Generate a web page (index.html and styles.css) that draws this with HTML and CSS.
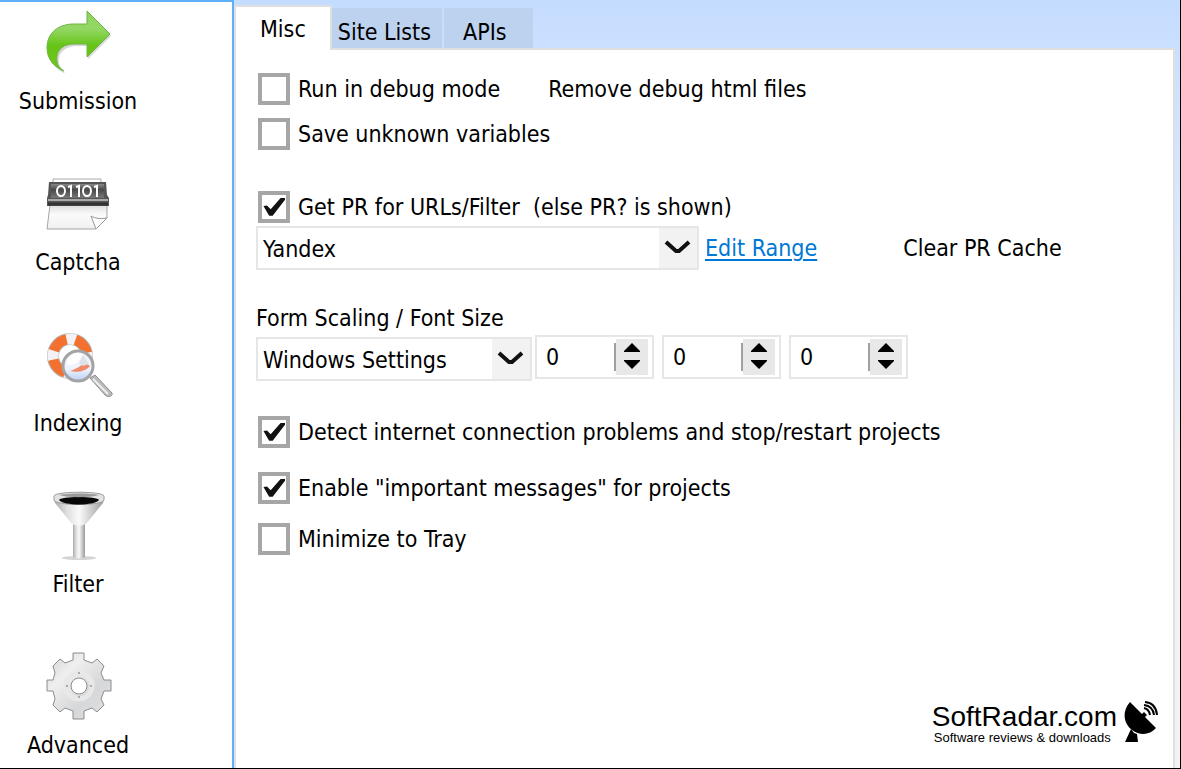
FILE: index.html
```html
<!DOCTYPE html>
<html lang="en">
<head>
  <meta charset="UTF-8">
  <meta name="viewport" content="width=device-width, initial-scale=1.0">
  <title>Options</title>
  <link rel="stylesheet" href="styles.css">
</head>
<body>
  <div class="window">
    <nav class="sidebar">
      <button class="nav-item" type="button">
        <svg class="nav-icon" viewBox="0 0 64 64" aria-hidden="true">
          <defs>
            <linearGradient id="green" x1="0" y1="0" x2="0" y2="1">
              <stop offset="0" stop-color="#8fd35f"/>
              <stop offset=".3" stop-color="#93d764"/>
              <stop offset=".58" stop-color="#66c416"/>
              <stop offset="1" stop-color="#6cc51c"/>
            </linearGradient>
          </defs>
          <path d="M17 62C8 58 1 49 1 38C1 23 12 14 28 14H41V2L64 25L41 48V35H30C20 35 13 40 12 47C11 54 13 58 18 62Z" fill="#888" opacity=".35" transform="translate(1 1)"/>
          <path d="M18 61C8 57 1 49 1 38C1 23 12 14 28 14H41V1L64 24L41 47V34H28C18 34 12 39 11 46C10 53 12 57 18 61Z" fill="url(#green)" stroke="#6fb544"/>
        </svg>
        Submission
      </button>
      <button class="nav-item" type="button">
        <svg class="nav-icon" viewBox="0 0 64 64" aria-hidden="true">
          <defs>
            <linearGradient id="dark" x1="0" y1="0" x2="0" y2="1">
              <stop offset="0" stop-color="#888"/>
              <stop offset=".4" stop-color="#4a4a4a"/>
              <stop offset="1" stop-color="#777"/>
            </linearGradient>
            <linearGradient id="sheet" x1="0" y1="0" x2="0" y2="1">
              <stop offset="0" stop-color="#dedede"/>
              <stop offset=".4" stop-color="#fafafa"/>
              <stop offset="1" stop-color="#f0f0f0"/>
            </linearGradient>
          </defs>
          <path d="M7 12V8H55V12" fill="#fff" stroke="#aaa"/>
          <path d="M4 34H61V47L50 58H1Z" fill="url(#sheet)" stroke="#a5a5a5"/>
          <path d="M61 47L50 58L45 45C50 48 56 48 61 47Z" fill="#fff" stroke="#999"/>
          <path d="M3 11H60L61 24L63 27V35H1V27L2 24Z" fill="#555"/>
          <rect x="5" y="13" width="53" height="14" fill="url(#dark)"/>
          <path d="M2 29H62" stroke="#aaa" stroke-width="2"/>
          <path d="M2 33H62" stroke="#333" stroke-width="3"/>
          <g fill="none" stroke="#fff" stroke-width="2">
            <ellipse cx="15" cy="20" rx="4" ry="5"/>
            <path d="M22 16L25 15V26M30 16L33 15V26M48 16L51 15V26"/>
            <ellipse cx="41" cy="20" rx="4" ry="5"/>
          </g>
        </svg>
        Captcha
      </button>
      <button class="nav-item" type="button">
        <svg class="nav-icon" viewBox="0 0 64 64" aria-hidden="true">
          <defs>
            <linearGradient id="lens" x1="0" y1="0" x2="0" y2="1">
              <stop offset="0" stop-color="#f1f3f8"/>
              <stop offset=".6" stop-color="#eef3fd"/>
              <stop offset="1" stop-color="#b9cff6"/>
            </linearGradient>
          </defs>
          <circle cx="24" cy="24" r="17" fill="none" stroke="#b4b4b4" stroke-width="12"/>
          <circle cx="24" cy="24" r="17" fill="none" stroke="#f4702f" stroke-width="10"/>
          <circle cx="24" cy="24" r="17" fill="none" stroke="#f2f2f4" stroke-width="11" stroke-dasharray="9 17.7" stroke-dashoffset="4"/>
          <path d="M44 46L49 43L66 61C67 64 63 66 59 63Z" fill="#bbb" stroke="#8e8e8e"/>
          <path d="M47 47L62 62" stroke="#eee" stroke-width="2"/>
          <circle cx="32" cy="34" r="15" fill="url(#lens)" stroke="#a3a3a3" stroke-width="3"/>
          <path d="M24 39C30 37 36 34 38 30L44 34C40 39 32 41 24 39Z" fill="#f08a68"/>
          <path d="M21 28C24 22 32 19 36 22C35 29 29 34 21 33Z" fill="#fff"/>
          <path d="M37 23L43 32L37 34L33 31Z" fill="#dfe1e8"/>
        </svg>
        Indexing
      </button>
      <button class="nav-item" type="button">
        <svg class="nav-icon" viewBox="0 0 64 64" aria-hidden="true">
          <defs>
            <linearGradient id="metal" x1="0" y1="0" x2="1" y2="0">
              <stop offset="0" stop-color="#aaa"/>
              <stop offset=".25" stop-color="#ddd"/>
              <stop offset=".5" stop-color="#fafafa"/>
              <stop offset=".75" stop-color="#ccc"/>
              <stop offset="1" stop-color="#999"/>
            </linearGradient>
          </defs>
          <ellipse cx="33" cy="65" rx="17" ry="2" fill="#aaa" opacity=".5"/>
          <path d="M27 29H39V64Q33 67 27 64Z" fill="url(#metal)"/>
          <path d="M8 6H58L57 10L40 31Q33 34 26 31L9 10Z" fill="url(#metal)"/>
          <path d="M8 3C9 -2 57 -2 58 3V7C57 13 9 13 8 7Z" fill="#e3e3e3" stroke="#9b9b9b"/>
          <path d="M13 7C14 3 52 3 53 7C49 13 17 13 13 7Z" fill="#070707"/>
          <path d="M13 2C24 0 43 0 53 2C43 5 23 5 13 2Z" fill="#999"/>
        </svg>
        Filter
      </button>
      <button class="nav-item" type="button">
        <svg class="nav-icon" viewBox="0 0 64 64" aria-hidden="true">
          <defs>
            <linearGradient id="gear" x1="0" y1="0" x2="1" y2="1">
              <stop offset="0" stop-color="#cfcfcf"/>
              <stop offset=".3" stop-color="#efefef"/>
              <stop offset=".65" stop-color="#d6d7d9"/>
              <stop offset="1" stop-color="#e2e2e2"/>
            </linearGradient>
          </defs>
          <path fill="url(#gear)" stroke="#8c8c8c" fill-rule="evenodd" d="M27 -1H38V6L46 9L51 5L58 12L55 19L58 26H65V37H58L55 45L58 51L51 58L46 54L38 57V65H27V57L19 54L14 58L7 51L9 45L7 37H1V26H7L9 19L7 12L14 5L19 9L27 6ZM33 24A8 8 0 1 0 33 40A8 8 0 1 0 33 24Z"/>
          <circle cx="33" cy="32" r="13" fill="none" stroke="#e8e8e8" stroke-width="5"/>
          <path d="M32 19H34M32 43H34M21 31V33M45 31V33" stroke="#aaa" stroke-width="2"/>
        </svg>
        Advanced
      </button>
    </nav>

    <main class="main">
      <div class="tabs">
        <button class="tab active" type="button">Misc</button>
        <button class="tab tab-lists" type="button">Site Lists</button>
        <button class="tab" type="button">APIs</button>
      </div>

      <form class="panel">
        <div class="check-row">
          <label class="check"><input type="checkbox"> Run in debug mode</label>
          <button class="remove-btn" type="button">Remove debug html files</button>
        </div>
        <div class="check-row unknown-row">
          <label class="check"><input type="checkbox"> Save unknown variables</label>
        </div>

        <div class="check-row pr-row">
          <label class="check"><input type="checkbox" checked> Get PR for URLs/Filter&nbsp; (else PR? is shown)</label>
        </div>
        <div class="field-row">
          <div class="combo combo-wide">
            <select aria-label="PR source">
              <option>Yandex</option>
            </select>
            <svg class="combo-arrow" viewBox="0 0 38 40" aria-hidden="true"><path d="M7 14L17 23H20L30 14" /></svg>
          </div>
          <a class="edit-link" href="#">Edit Range</a>
          <button class="clear-btn" type="button">Clear PR Cache</button>
        </div>

        <label class="caption" for="scaling">Form Scaling / Font Size</label>
        <div class="scale-row">
          <div class="combo combo-scale">
            <select id="scaling">
              <option>Windows Settings</option>
            </select>
            <svg class="combo-arrow" viewBox="0 0 38 40" aria-hidden="true"><path d="M7 14L17 23H20L30 14" /></svg>
          </div>
          <div class="spinners">
            <div class="spinner">
              <input type="number" value="0" aria-label="Font size 1">
              <svg class="spin-arrows" viewBox="0 0 32 36" aria-hidden="true"><path d="M16 4L24 12V13H8V12ZM16 30L24 22V21H8V22Z"/></svg>
            </div>
            <div class="spinner">
              <input type="number" value="0" aria-label="Font size 2">
              <svg class="spin-arrows" viewBox="0 0 32 36" aria-hidden="true"><path d="M16 4L24 12V13H8V12ZM16 30L24 22V21H8V22Z"/></svg>
            </div>
            <div class="spinner">
              <input type="number" value="0" aria-label="Font size 3">
              <svg class="spin-arrows" viewBox="0 0 32 36" aria-hidden="true"><path d="M16 4L24 12V13H8V12ZM16 30L24 22V21H8V22Z"/></svg>
            </div>
          </div>
        </div>

        <div class="check-row detect-row">
          <label class="check"><input type="checkbox" checked> Detect internet connection problems and stop/restart projects</label>
        </div>
        <div class="check-row messages-row">
          <label class="check"><input type="checkbox" checked> Enable "important messages" for projects</label>
        </div>
        <div class="check-row tray-row">
          <label class="check"><input type="checkbox"> Minimize to Tray</label>
        </div>

        <div class="brand">
          <div>
            <div class="brand-name">SoftRadar.com</div>
            <div class="brand-tag">Software reviews &amp; downloads</div>
          </div>
          <svg class="brand-icon" viewBox="0 0 34 42" aria-hidden="true">
            <path d="M6 1L18 13L20 11L23 14L21 16L32 27C26 34 16 35 8 29C-1 22 -2 10 6 1Z"/>
            <path d="M7 28L10 32L13 33L14 41H1Z"/>
            <g fill="none" stroke="#000" stroke-width="2">
              <path d="M20 7Q25 8 26 14M20 4Q29 5 30 14M21 1Q32 2 33 14"/>
            </g>
          </svg>
        </div>
      </form>
    </main>
  </div>
</body>
</html>
```
FILE: styles.css
```css
* {
  box-sizing: border-box;
}

body {
  margin: 0;
  font-family: "DejaVu Sans Condensed", "DejaVu Sans", sans-serif;
  font-size: 23px;
  line-height: 28px;
  color: #000;
}

button,
input,
select {
  font: inherit;
  color: inherit;
}

button {
  border: none;
  background: none;
  padding: 0;
  cursor: pointer;
}

.window {
  display: flex;
  min-height: 100vh;
  border-right: 1px solid #000;
  border-bottom: 1px solid #000;
}

/* left icon bar */
.sidebar {
  flex: none;
  display: flex;
  flex-direction: column;
  gap: 56px;
  width: 234px;
  padding-top: 8px;
  border-top: 2px solid #5fb0fb;
  border-right: 2px solid #5fb0fb;
  background: #fff;
}

.nav-item {
  display: flex;
  flex-direction: column;
  align-items: center;
  gap: 13px;
  width: 156px;
}

.nav-icon {
  width: 64px;
  height: 64px;
  overflow: visible;
}

.main {
  flex: 1;
  display: flex;
  flex-direction: column;
  min-width: 0;
  padding: 5px 5px 0 0;
  background: linear-gradient(#c4dcff, #cbe0ff 50px, #e6f0fc 400px, #f2f2f2 450px);
}

.tabs {
  display: flex;
  align-items: flex-end;
  height: 43px;
}

.tab {
  height: 40px;
  margin-right: 2px;
  padding: 8px 26px 0 19px;
  background: #bcd2ef;
}

.tab-lists {
  padding: 8px 11px 0 6px;
}

.tab.active {
  position: relative;
  height: 45px;
  margin: 0 0 -2px;
  padding: 0 24px;
  border: 2px solid #dfdfdf;
  border-bottom: none;
  background: #fff;
}

.panel {
  flex: 1;
  display: flex;
  flex-direction: column;
  align-items: flex-start;
  padding: 23px 15px 23px 20px;
  border: 2px solid #dfdfdf;
  border-bottom: none;
  background: #fff;
}

.check-row {
  display: flex;
  align-items: center;
  padding-left: 2px;
}

.check {
  display: flex;
  align-items: center;
  gap: 8px;
}

.check input {
  appearance: none;
  flex: none;
  display: grid;
  place-items: center;
  width: 32px;
  height: 32px;
  margin: 0;
  border: 4px solid #a6a6a6;
  background: #fff;
}

.check input:checked::before {
  content: "";
  width: 22px;
  height: 18px;
  background: #111;
  clip-path: polygon(2% 44%, 18% 42%, 35% 62%, 80% 0, 100% 0, 100% 10%, 44% 98%, 28% 98%);
}

.remove-btn {
  margin-left: 48px;
}

.unknown-row {
  margin-top: 13px;
}

.pr-row {
  margin-top: 41px;
}

.field-row {
  display: flex;
  align-items: center;
  margin-top: 3px;
}

.combo {
  position: relative;
}

.combo-wide {
  width: 443px;
}

.combo-scale {
  width: 276px;
}

.combo select {
  appearance: none;
  display: block;
  width: 100%;
  height: 44px;
  padding: 2px 40px 0 5px;
  border: 2px solid #e6e6e6;
  border-radius: 0;
  background: #fff;
}

.combo-arrow {
  position: absolute;
  top: 2px;
  right: 2px;
  width: 38px;
  height: 40px;
  background: #f2f2f2;
  pointer-events: none;
}

.combo-arrow path {
  fill: none;
  stroke: #111;
  stroke-width: 4px;
}

.edit-link {
  margin-left: 6px;
  color: #0078d7;
  text-underline-offset: 3px;
}

.clear-btn {
  margin-left: 86px;
}

.caption {
  margin-top: 34px;
}

.scale-row {
  display: flex;
  gap: 3px;
  margin-top: 3px;
}

.scale-row .combo {
  margin-top: 2px;
}

.spinners {
  display: flex;
  gap: 8px;
}

.spinner {
  display: flex;
  align-items: center;
  width: 119px;
  height: 44px;
  padding-right: 4px;
  border: 2px solid #e6e6e6;
}

.spinner input {
  appearance: textfield;
  flex: 1;
  width: 0;
  height: 28px;
  padding: 0 0 0 9px;
  border: none;
  border-right: 2px solid #a0a0a0;
  background: #fff;
}

.spin-arrows {
  width: 32px;
  height: 36px;
  background: #e8e8e8;
}

.detect-row {
  margin-top: 35px;
}

.messages-row {
  margin-top: 24px;
}

.tray-row {
  margin-top: 19px;
}

/* logo in the corner */
.brand {
  display: flex;
  gap: 7px;
  align-self: flex-end;
  margin-top: auto;
  font-family: "Liberation Sans", Arial, sans-serif;
}

.brand-name {
  padding-top: 2px;
  font-size: 28px;
  line-height: 28px;
}

.brand-tag {
  padding-left: 2px;
  font-size: 13px;
  line-height: 14px;
}

.brand-icon {
  width: 34px;
  height: 42px;
  overflow: visible;
}
```
